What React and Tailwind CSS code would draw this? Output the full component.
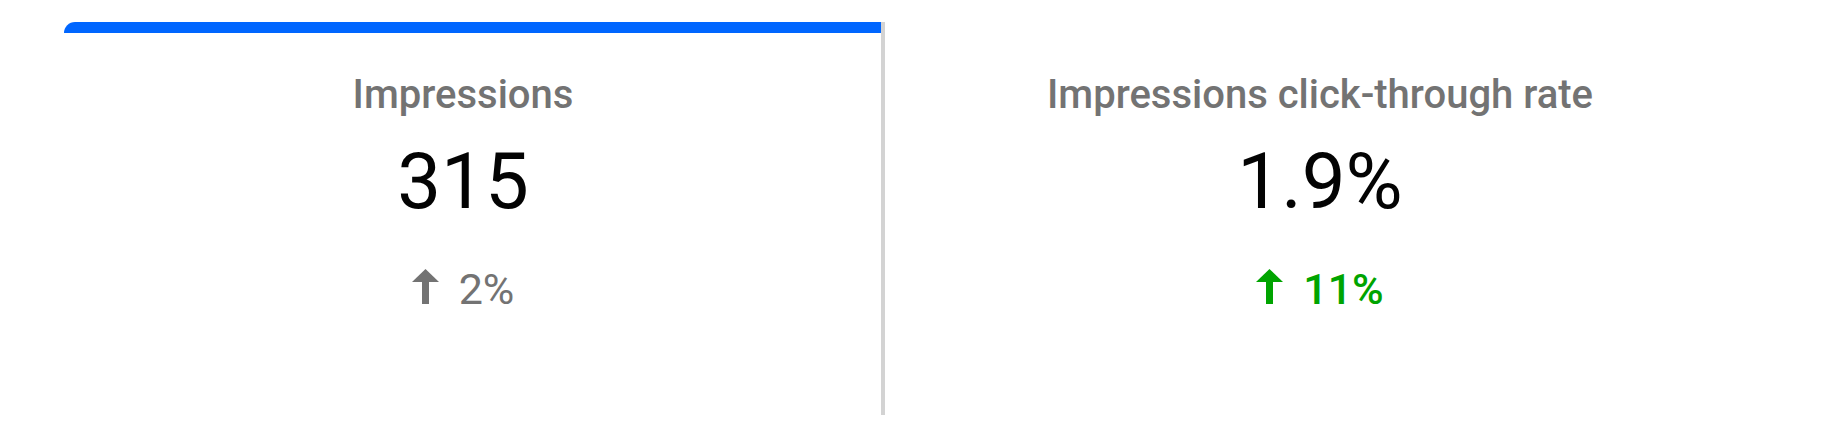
import React from 'react';

const metrics = [
  { title: 'Impressions', value: '315', change: '2%', trend: 'flat', selected: true },
  { title: 'Impressions click-through rate', value: '1.9%', change: '11%', trend: 'up', selected: false },
];

function ArrowUp({ className }) {
  return (
    <svg width="27" height="35" viewBox="0 0 27 35" className={className} fill="currentColor">
      <polygon points="13.5,0 27,13 0,13" />
      <rect x="10" y="12.5" width="7" height="22.5" />
    </svg>
  );
}

function MetricCard({ metric, last }) {
  const changeColor = metric.trend === 'up' ? 'text-[#00a400] font-medium' : 'text-[#737373]';
  return (
    <div
      className={`flex flex-col h-[393px] ${last ? 'w-[870px]' : 'w-[821px] border-r-4 border-[#d3d3d3]'}`}
    >
      {/* Selected tab indicator */}
      <div className={`h-[11px] ${metric.selected ? 'bg-[#0066ff] rounded-tl-[11px]' : ''}`} />

      <div className={`flex flex-col items-center ${last ? '' : 'pr-[19px]'}`}>
        <div className="mt-[42px] text-[40px] leading-none font-medium text-[#737373]">
          {metric.title}
        </div>
        <div className="mt-[28px] text-[78px] leading-none text-[#030303]">
          {metric.value}
        </div>
        <div className={`mt-[47px] flex items-start gap-[20px] ${changeColor}`}>
          <ArrowUp className="mt-[1px]" />
          <span className="text-[43px] leading-none">{metric.change}</span>
        </div>
      </div>
    </div>
  );
}

export default function App() {
  return (
    <div
      className="w-[1824px] h-[440px] bg-white pt-[22px] pl-[64px] flex"
      style={{ fontFamily: 'Roboto, "Noto Sans", sans-serif' }}
    >
      {metrics.map((m, i) => (
        <MetricCard key={m.title} metric={m} last={i === metrics.length - 1} />
      ))}
    </div>
  );
}
